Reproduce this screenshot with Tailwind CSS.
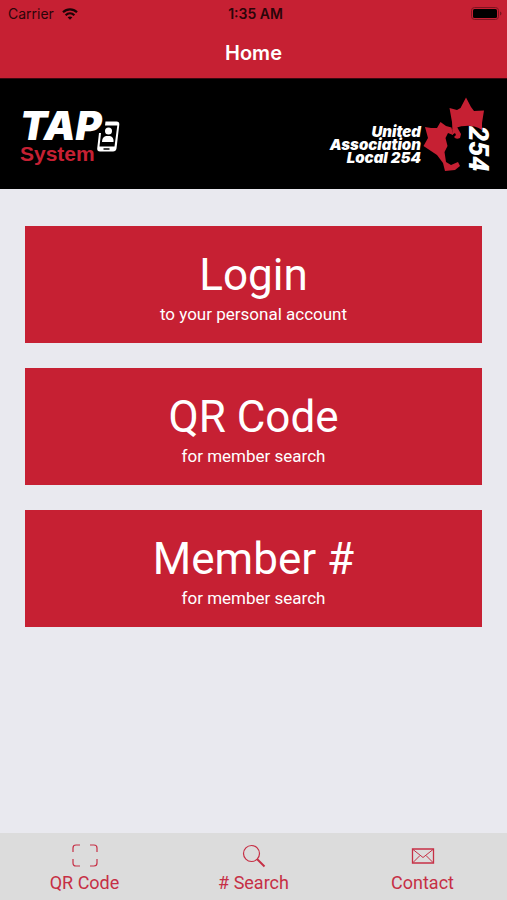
<!DOCTYPE html>
<html lang="en">
<head>
    <meta charset="UTF-8">
    <meta name="viewport" content="width=device-width, initial-scale=1.0">
    <title>Home</title>
    <script src="https://cdn.jsdelivr.net/npm/@tailwindcss/browser@4"></script>
</head>
<body class="flex min-h-screen flex-col bg-[#e9e9ef] font-['Roboto',sans-serif]">
    <!-- Status bar and title -->
    <header class="border-b border-[#3a0810] bg-[#c62033]">
        <div class="grid h-7 grid-cols-3 items-center pl-2 pr-1 font-['Inter',sans-serif] text-sm text-[#2b0509]">
            <div class="flex items-center gap-2">
                <span>Carrier</span>
                <svg class="h-3 w-4" viewBox="0 0 16 12" fill="none" stroke="#1c0306" stroke-width="2.2">
                    <path d="M1 4.3C5 .4 11 .4 15 4.3" />
                    <path d="M3.6 7.2c2.6-2.4 6.2-2.4 8.8 0" />
                    <path d="M5.6 9.3c1.4-1.2 3.4-1.2 4.8 0L8 11.8z" fill="#1c0306" stroke="none" />
                </svg>
            </div>
            <span class="text-center font-semibold">1:35 AM</span>
            <svg class="h-3.5 w-8 justify-self-end" viewBox="0 0 32 14">
                <rect x="0.5" y="0.5" width="27" height="12" rx="3" fill="none" stroke="#7d1420" />
                <rect x="2" y="2" width="24" height="9" rx="1.5" fill="#000" />
                <path d="M29 4.5c2 .8 2 3.2 0 4z" fill="#7d1420" />
            </svg>
        </div>
        <h1 class="h-[50px] text-center font-['Inter',sans-serif] text-xl leading-[50px] font-semibold text-white">Home</h1>
    </header>

    <!-- Logos -->
    <div class="flex h-[110px] items-center justify-between bg-black pl-4 pr-3">
        <div class="flex items-center pt-1">
            <div class="w-20 pl-1">
                <div class="font-['Inter',sans-serif] text-[40px] leading-9 font-black text-white italic">TAP</div>
                <div class="font-['Liberation_Sans',sans-serif] text-[21px] leading-5 font-bold text-[#c62033]">System</div>
            </div>
            <svg class="h-8 w-6" viewBox="0 0 24 32">
                <path d="M9.5 1.5H20.5Q23.5 1.5 23.3 4.5L20.5 28.5Q20 31.5 17 31.5H4Q1 31.5 1.2 28.5L3 13H5L3.5 26.5H18.5L21.3 5.500H9z" fill="#fff" />
                <circle cx="12.5" cy="11" r="3.5" fill="#fff" />
                <path d="M6 22q0-5 4-6h4q4 1 3.500 6z" fill="#fff" />
                <path d="M7.5 29h6" stroke="#000" stroke-width="1.5" />
            </svg>
        </div>
        <div class="flex items-center">
            <div class="pt-5 text-right font-['Inter',sans-serif] text-[15px] leading-[13px] font-black text-white italic">United<br>Association<br>Local 254</div>
            <svg class="h-20 w-[74px]" viewBox="0 0 74 80">
                <!-- maple leaf split by a face profile -->
                <path d="M45 3.5L50 13L53 17L63 16.500L61 29L61 36Q53 31 44 32Q36 32 31.500 37L31 28L28.500 14L36 16L39.500 14z" fill="#c62033" />
                <path d="M19.500 28L25 32L30.500 33.500L32 41L27 39L24.500 44L26.500 52L23.500 58L25 68L30 71L37 68L39 72L34 76L24 77L22 69L16 61L2.500 52L7 44L4 33L10 34L16 34z" fill="#c62033" />
                <path d="M31.500 35L36 33L40 40L39 44Q35 46 33 43L35 41L34 39L31 41z" fill="#c62033" />
                <text transform="translate(48 32) rotate(90)" font-family="Roboto, sans-serif" font-size="27" font-weight="900" font-style="italic" fill="#fff">254</text>
            </svg>
        </div>
    </div>

    <main class="flex grow flex-col gap-[25px] px-[25px] pt-[37px]">
        <button type="button" class="h-[117px] bg-[#c62033] pt-1 text-white">
            <span class="block text-[44px] leading-[54px]">Login</span>
            <span class="block text-[17px] leading-6">to your personal account</span>
        </button>
        <button type="button" class="h-[117px] bg-[#c62033] pt-1 text-white">
            <span class="block text-[44px] leading-[54px]">QR Code</span>
            <span class="block text-[17px] leading-6">for member search</span>
        </button>
        <button type="button" class="h-[117px] bg-[#c62033] pt-1 text-white">
            <span class="block text-[44px] leading-[54px]">Member #</span>
            <span class="block text-[17px] leading-6">for member search</span>
        </button>
    </main>

    <nav class="grid h-[67px] grid-cols-3 bg-[#dcdcdc] pt-2.5 text-lg leading-6 text-[#c62f45]">
        <a href="#" class="flex flex-col items-center gap-0.5">
            <svg class="size-[26px]" viewBox="0 0 26 26" fill="none" stroke="currentColor" stroke-width="1.2">
                <path d="M1 9V5q0-3 3-3h4M18 2h4q3 0 3 3v4M25 16v4q0 3-3 3h-4M8 23H4q-3 0-3-3v-4" />
            </svg>
            <span>QR Code</span>
        </a>
        <a href="#" class="flex flex-col items-center gap-0.5">
            <svg class="size-[26px]" viewBox="0 0 26 26" fill="none" stroke="currentColor">
                <circle cx="10.5" cy="10.5" r="8" stroke-width="1.2" />
                <path d="M16 16l7.5 7.5" stroke-width="2" />
            </svg>
            <span># Search</span>
        </a>
        <a href="#" class="flex flex-col items-center gap-0.5">
            <svg class="size-[26px]" viewBox="0 0 26 26" fill="none" stroke="currentColor">
                <path d="M2.5 6h21v14h-21z" stroke-width="1.3" />
                <path d="M3 6.5l10 8 10-8M3 19.5l7-7M23 19.5l-7-7" />
            </svg>
            <span>Contact</span>
        </a>
    </nav>
</body>
</html>
